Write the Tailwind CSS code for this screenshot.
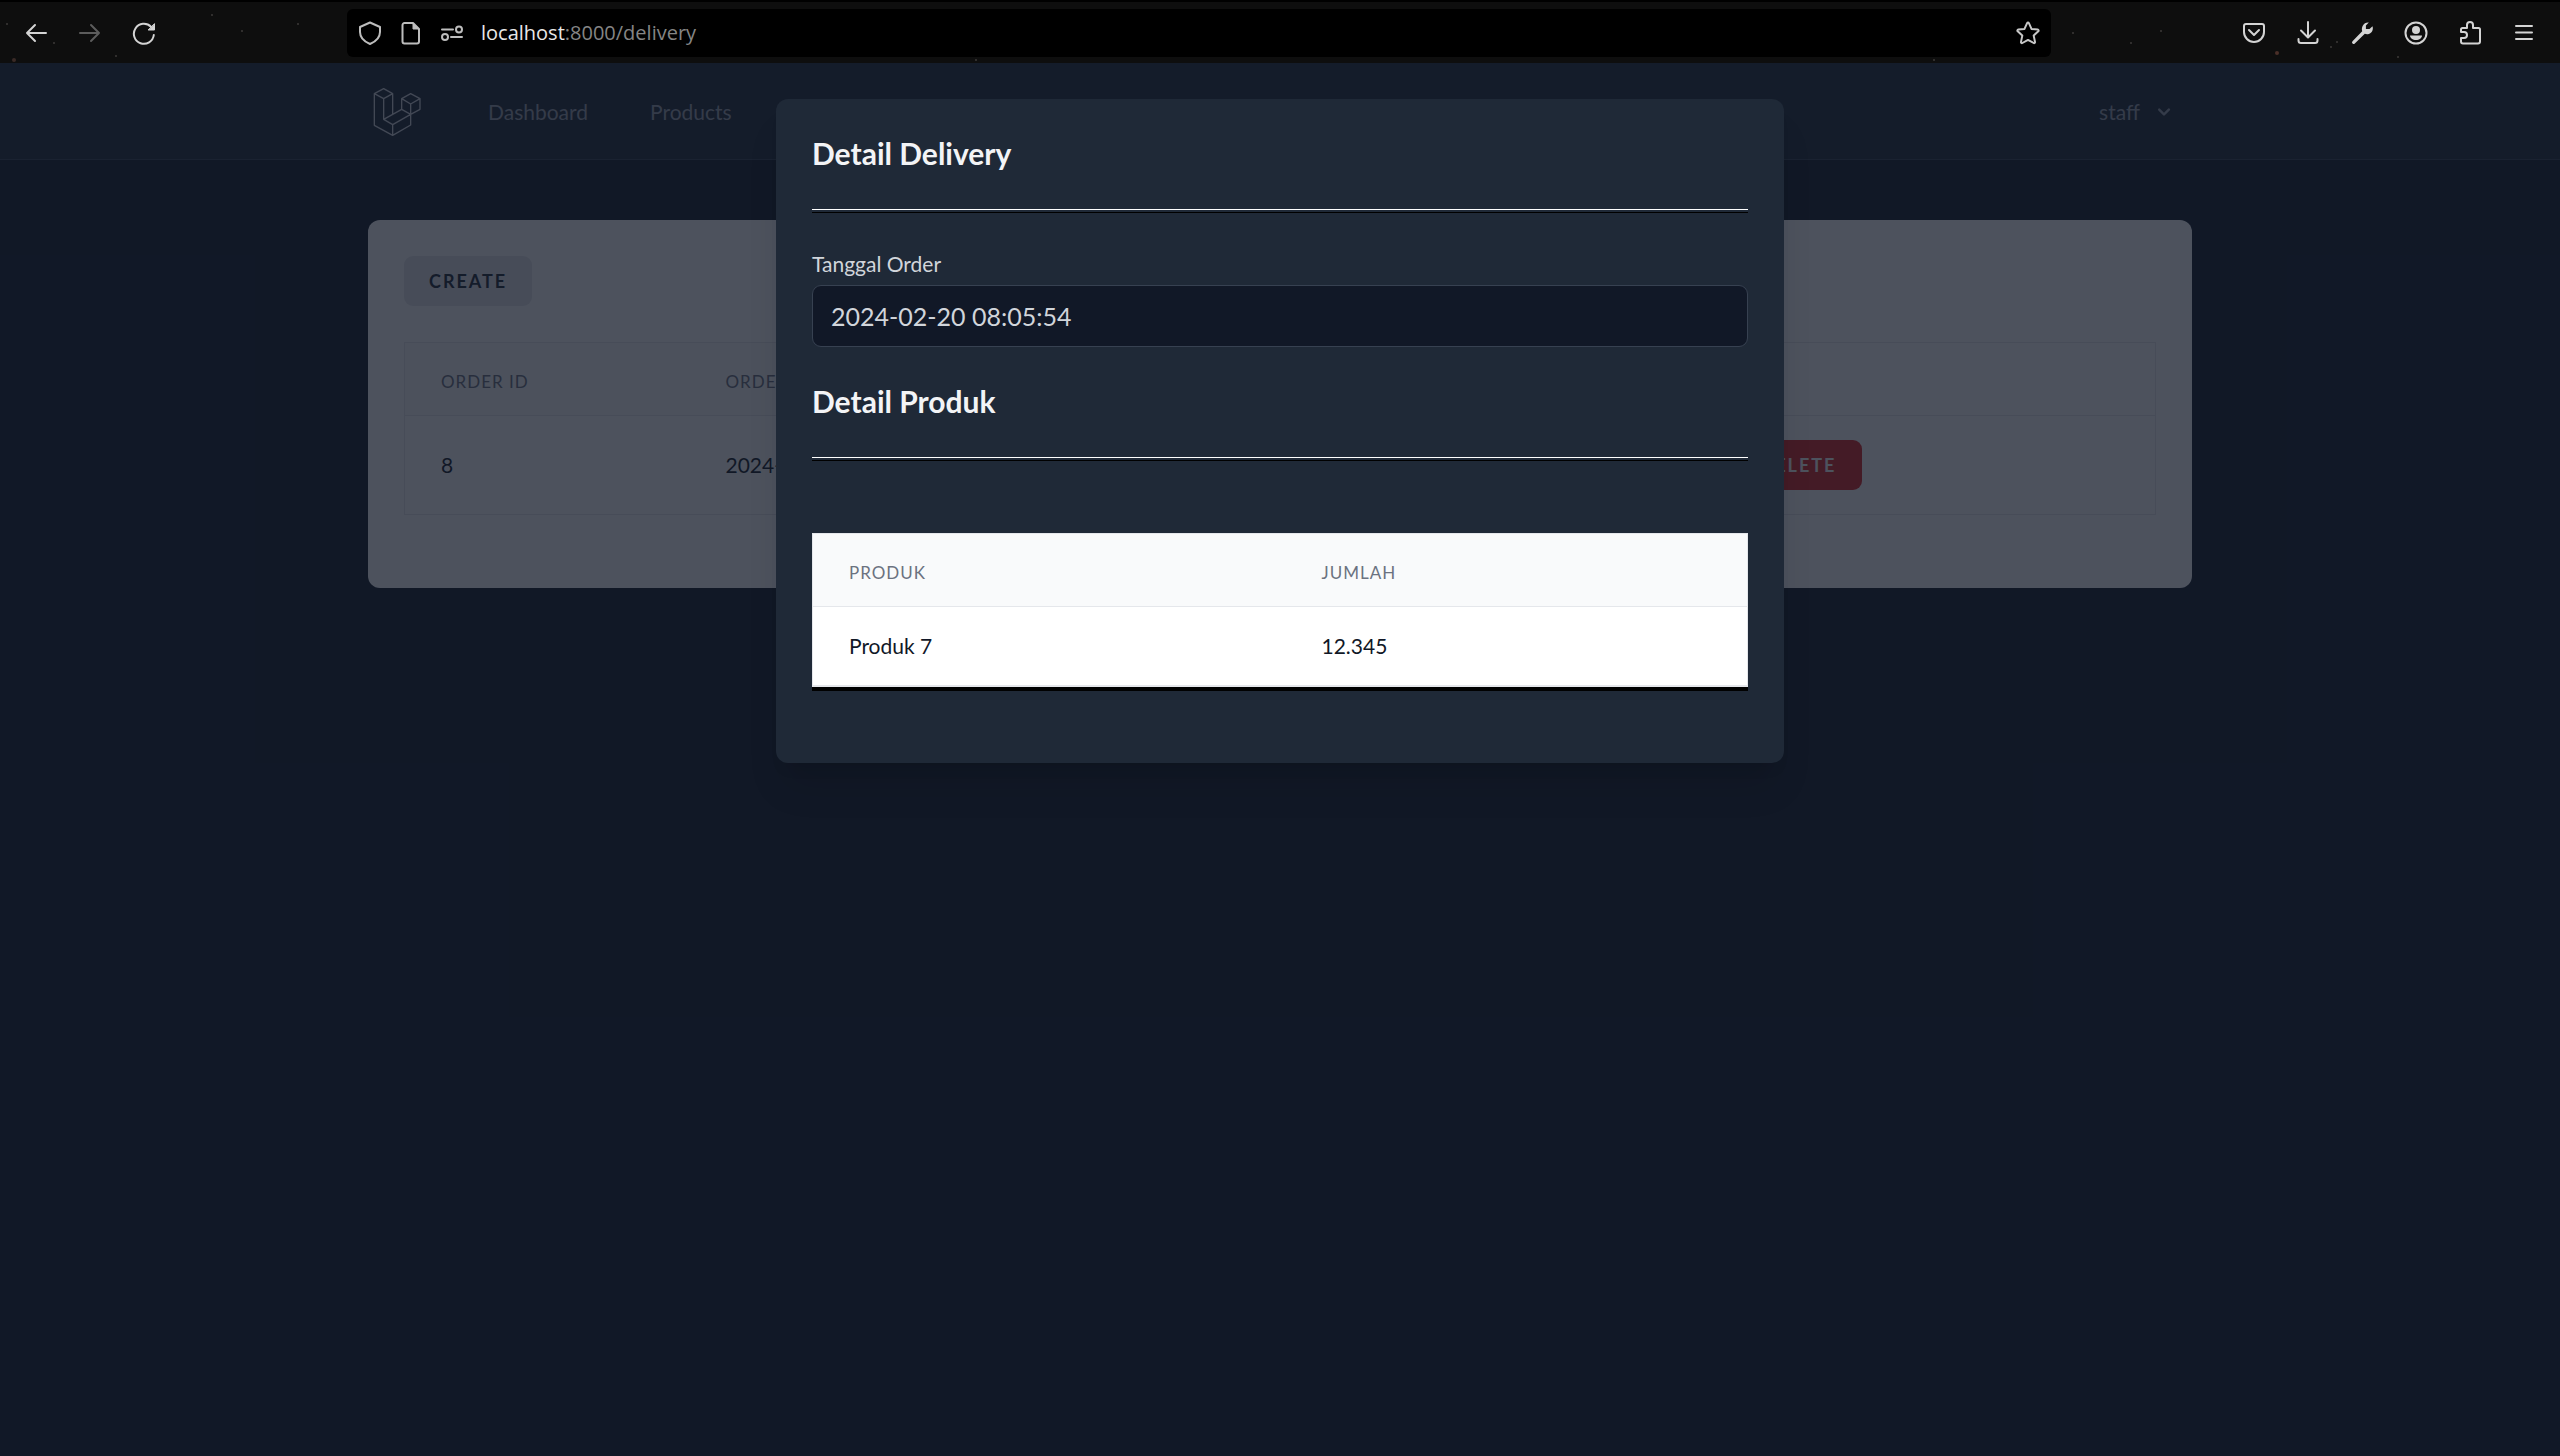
<!DOCTYPE html>
<html lang="id">
<head>
<meta charset="utf-8">
<meta name="viewport" content="width=device-width, initial-scale=1">
<title>Delivery</title>
<script src="https://cdn.jsdelivr.net/npm/@tailwindcss/browser@4"></script>
</head>
<body class="flex min-h-screen flex-col bg-[#111827] font-['Lato',sans-serif] antialiased">

<!-- Browser toolbar -->
<header class="relative flex h-[63px] shrink-0 items-center border-t-2 border-black bg-[#0e0e0e] px-6 text-[#d4d4d4]">
  <svg class="absolute inset-0 size-full" fill="#3c3a38" aria-hidden="true">
    <circle cx="7" cy="22" r="1"/><circle cx="14" cy="58" r="2" fill="#3a2a26"/><circle cx="54" cy="41" r="1"/><circle cx="116" cy="54" r="1"/><circle cx="212" cy="13" r="1"/><circle cx="242" cy="29" r="1"/><circle cx="298" cy="22" r="1"/><circle cx="976" cy="58" r="1"/><circle cx="1934" cy="58" r="1"/>
    <circle cx="2073" cy="31" r="1"/><circle cx="2131" cy="41" r="1"/><circle cx="2161" cy="29" r="1"/><circle cx="2277" cy="51" r="2" fill="#4a2f28"/><circle cx="2331" cy="45" r="1"/><circle cx="2337" cy="40" r="1"/><circle cx="2398" cy="55" r="1"/>
  </svg>
  <div class="relative flex gap-[30px]">
    <button aria-label="Back"><svg class="size-6" viewBox="0 0 24 24" fill="none" stroke="currentColor" stroke-width="2" stroke-linecap="round" stroke-linejoin="round"><path d="M22 12H3M11 4 3 12l8 8"/></svg></button>
    <button aria-label="Forward" class="text-[#5c5c5c]"><svg class="size-6" viewBox="0 0 24 24" fill="none" stroke="currentColor" stroke-width="2" stroke-linecap="round" stroke-linejoin="round"><path d="M2 12h19M13 4l8 8-8 8"/></svg></button>
    <button aria-label="Reload"><svg class="size-6" viewBox="0 0 24 24" fill="none" stroke="currentColor" stroke-width="2" stroke-linecap="round"><path d="M21.8 14A10 10 0 1 1 19 5.800"/><path d="M22.500 3v6h-6z" fill="currentColor" stroke-width="1" stroke-linejoin="round"/></svg></button>
  </div>
  <div class="relative mx-[191px] flex h-12 min-w-0 flex-1 items-center gap-[17px] rounded-md bg-black px-[11px] text-[#bdbdbd]">
    <svg class="size-6 shrink-0" viewBox="0 0 24 24" fill="none" stroke="currentColor" stroke-width="2" stroke-linejoin="round"><path d="M12 1.500 22 6v5c0 5-4 9.500-10 12C6 20.500 2 16 2 11V6z"/></svg>
    <svg class="size-6 shrink-0" viewBox="0 0 24 24" fill="none" stroke="currentColor" stroke-width="2" stroke-linejoin="round"><path d="M5.500 2H14l6 6v12.500a2 2 0 0 1-2 2H5.500a2 2 0 0 1-2-2V4a2 2 0 0 1 2-2z"/><path d="M14 2v6h6z" fill="currentColor" stroke-width="1"/></svg>
    <svg class="size-6 shrink-0" viewBox="0 0 24 24" fill="none" stroke="currentColor" stroke-width="2" stroke-linecap="round"><path d="M2 8.500h11M11 16h11"/><circle cx="19" cy="8.500" r="3"/><circle cx="5" cy="16" r="3"/></svg>
    <span class="min-w-0 flex-1 truncate font-['Open_Sans',sans-serif] text-[20px] leading-[30px] text-[#858585]"><span class="text-[#e8e8e8]">localhost</span>:8000/delivery</span>
    <button aria-label="Bookmark this page" class="text-[#c8c8c8]"><svg class="size-6" viewBox="0 0 24 24" fill="none" stroke="currentColor" stroke-width="2" stroke-linejoin="round"><path d="M11.100 2.200c.4-.8 1.400-.8 1.800 0l2.600 5.700 6.200.7c.9.100 1.200 1.100.6 1.700l-4.600 4.300 1.300 6.300c.2.900-.7 1.500-1.400 1.100L12 18.900 6.400 22c-.7.400-1.600-.2-1.400-1.100l1.300-6.300L1.700 10.300c-.6-.6-.3-1.600.6-1.700l6.200-.7z"/></svg></button>
  </div>
  <div class="relative flex gap-[30px]">
    <button aria-label="Pocket"><svg class="size-6" viewBox="0 0 24 24" fill="none" stroke="currentColor" stroke-width="2" stroke-linecap="round" stroke-linejoin="round"><path d="M4 3h16a2 2 0 0 1 2 2v6a10 10 0 0 1-20 0V5a2 2 0 0 1 2-2z"/><path d="m7 9 5 5 5-5"/></svg></button>
    <button aria-label="Downloads"><svg class="size-6" viewBox="0 0 24 24" fill="none" stroke="currentColor" stroke-width="2" stroke-linecap="round" stroke-linejoin="round"><path d="M12 1v15M5 9.500l7 7 7-7M2.500 18v1.500a2.500 2.500 0 0 0 2.500 2.500h14a2.500 2.500 0 0 0 2.500-2.500V18"/></svg></button>
    <button aria-label="Developer tools"><svg class="size-6" viewBox="0 0 24 24" fill="currentColor"><path d="M18.800 1.600 15.900 4.500v3.600h3.600l3-2.900c1.100 3.200-.4 6.800-3.700 7.800-1.400.4-2.800.3-4-.2l-10 9.600a1.500 1.500 0 0 1-2.300-2.200l9.700-9.900c-1.200-4 1.500-9.300 6.600-8.700z"/></svg></button>
    <button aria-label="Account"><svg class="size-6" viewBox="0 0 24 24" fill="none" stroke="currentColor" stroke-width="2"><circle cx="12" cy="12" r="10.500"/><circle cx="12" cy="9" r="4" fill="currentColor" stroke="none"/><path d="M6 14.500h12c0 2.500-2.700 4.500-6 4.500s-6-2-6-4.500z" fill="currentColor" stroke="none"/></svg></button>
    <button aria-label="Extensions"><svg class="size-6" viewBox="0 0 24 24" fill="none" stroke="currentColor" stroke-width="2" stroke-linejoin="round"><path d="M9 7V4a3 3 0 0 1 6 0v3h5.500a1.500 1.500 0 0 1 1.500 1.500v12a2 2 0 0 1-2 2H5a2 2 0 0 1-2-2V17h3a3 3 0 0 0 0-6H3V8.500A1.500 1.500 0 0 1 4.500 7z"/></svg></button>
    <button aria-label="Menu"><svg class="size-6" viewBox="0 0 24 24" fill="none" stroke="currentColor" stroke-width="2" stroke-linecap="round"><path d="M4 5h16M4 11.500h16M4 18h16"/></svg></button>
  </div>
</header>

<div class="relative flex-1">
  <!-- Page behind the dialog -->
  <nav class="border-b border-[#374151] bg-[#1f2937] text-[21px] leading-[30px] text-[#9ca3af]">
    <div class="mx-auto flex h-24 max-w-[1824px] items-center pt-0.5">
      <a href="#" aria-label="Home" class="mr-[65px]">
        <svg class="h-[50px] w-[55px]" viewBox="24 33 165 150" fill="none" stroke="#d1d5db" stroke-width="4" stroke-linejoin="round">
          <path d="M43 53 71 38l27 15-27 15zM43 53v95l55 30 54-31v-32M71 68v62l27 16v32M98 53v62M71 130l54-30 27 15-54 31M125 100V68l27-15 28 15v32l-28 15V84l28-16M125 68l27 16"/>
        </svg>
      </a>
      <div class="flex flex-1 gap-[62px]">
        <a href="#">Dashboard</a>
        <a href="#">Products</a>
      </div>
      <button class="mr-4 flex items-center gap-3">
        staff
        <svg class="size-6" viewBox="0 0 20 20" fill="currentColor"><path d="M5.300 7.300a1 1 0 0 1 1.400 0L10 10.600l3.300-3.300a1 1 0 1 1 1.400 1.400l-4 4a1 1 0 0 1-1.400 0l-4-4a1 1 0 0 1 0-1.400z"/></svg>
      </button>
    </div>
  </nav>

  <main class="mx-auto max-w-[1824px] pt-[60px]">
    <section class="rounded-xl bg-white px-9 pt-9 pb-[73px]">
      <button class="h-[50px] rounded-[9px] bg-[#e5e7eb] px-[25px] text-[18px] font-bold tracking-[2px] text-[#1f2937]">CREATE</button>
      <table class="mt-9 w-full table-fixed border-collapse border border-[#e5e7eb] text-left">
        <thead>
          <tr class="border-b border-[#e5e7eb] text-[17px] leading-6 tracking-[1px] text-[#6b7280]">
            <th class="w-[285px] bg-[#f9fafb] px-9 pt-[27px] pb-[21px] font-normal">ORDER ID</th>
            <th class="bg-[#f9fafb] px-9 pt-[27px] pb-[21px] font-normal">ORDER DATE</th>
            <th class="w-[458px]"></th>
          </tr>
        </thead>
        <tbody>
          <tr class="h-[99px] text-[21px] leading-[30px] text-[#111827]">
            <td class="px-9">8</td>
            <td class="px-9">2024-02-20 08:05:54</td>
            <td class="px-9"><button class="h-[50px] rounded-[9px] bg-[#dc2626] px-[26px] text-[18px] leading-6 font-bold tracking-[2px] text-white">DELETE</button></td>
          </tr>
        </tbody>
      </table>
    </section>
  </main>

  <!-- Dialog -->
  <div class="absolute inset-0 bg-[#111827]/75"></div>
  <div class="absolute inset-x-0 top-9 flex justify-center">
    <section role="dialog" aria-modal="true" aria-labelledby="dialog-title" class="w-full max-w-[1008px] rounded-xl bg-[#1f2937] px-9 pt-9 pb-[76px] shadow-[0_30px_38px_-8px_rgb(0_0_0/0.1),0_12px_15px_-9px_rgb(0_0_0/0.1)]">
      <h2 id="dialog-title" class="text-[30px] leading-9 font-bold text-[#f3f4f6]">Detail Delivery</h2>
      <hr class="mt-[38px] border-t border-white shadow-[0_3px_0_#000]">
      <label for="order-date" class="mt-[39px] block text-[21px] leading-[30px] text-[#d1d5db]">Tanggal Order</label>
      <input id="order-date" type="text" readonly value="2024-02-20 08:05:54" class="mt-1.5 block h-[62px] w-full rounded-[9px] border border-[#374151] bg-[#111827] px-[18px] text-[25px] text-[#d1d5db]">
      <h2 class="mt-9 text-[30px] leading-9 font-bold text-[#f3f4f6]">Detail Produk</h2>
      <hr class="mt-[38px] border-t border-white shadow-[0_3px_0_#000]">
      <table class="mt-[75px] w-full table-fixed border-collapse border border-b-2 border-[#e5e7eb] bg-white text-left shadow-[0_4px_0_#000]">
        <thead>
          <tr class="border-b border-[#e5e7eb] bg-[#f9fafb] text-[17px] leading-6 tracking-[1px] text-[#6b7280]">
            <th class="w-[473px] px-9 pt-[27px] pb-[21px] font-normal">PRODUK</th>
            <th class="px-9 pt-[27px] pb-[21px] font-normal">JUMLAH</th>
          </tr>
        </thead>
        <tbody>
          <tr class="h-[79px] text-[21px] leading-[30px] text-[#111827]">
            <td class="px-9">Produk 7</td>
            <td class="px-9">12.345</td>
          </tr>
        </tbody>
      </table>
    </section>
  </div>
</div>
</body>
</html>
